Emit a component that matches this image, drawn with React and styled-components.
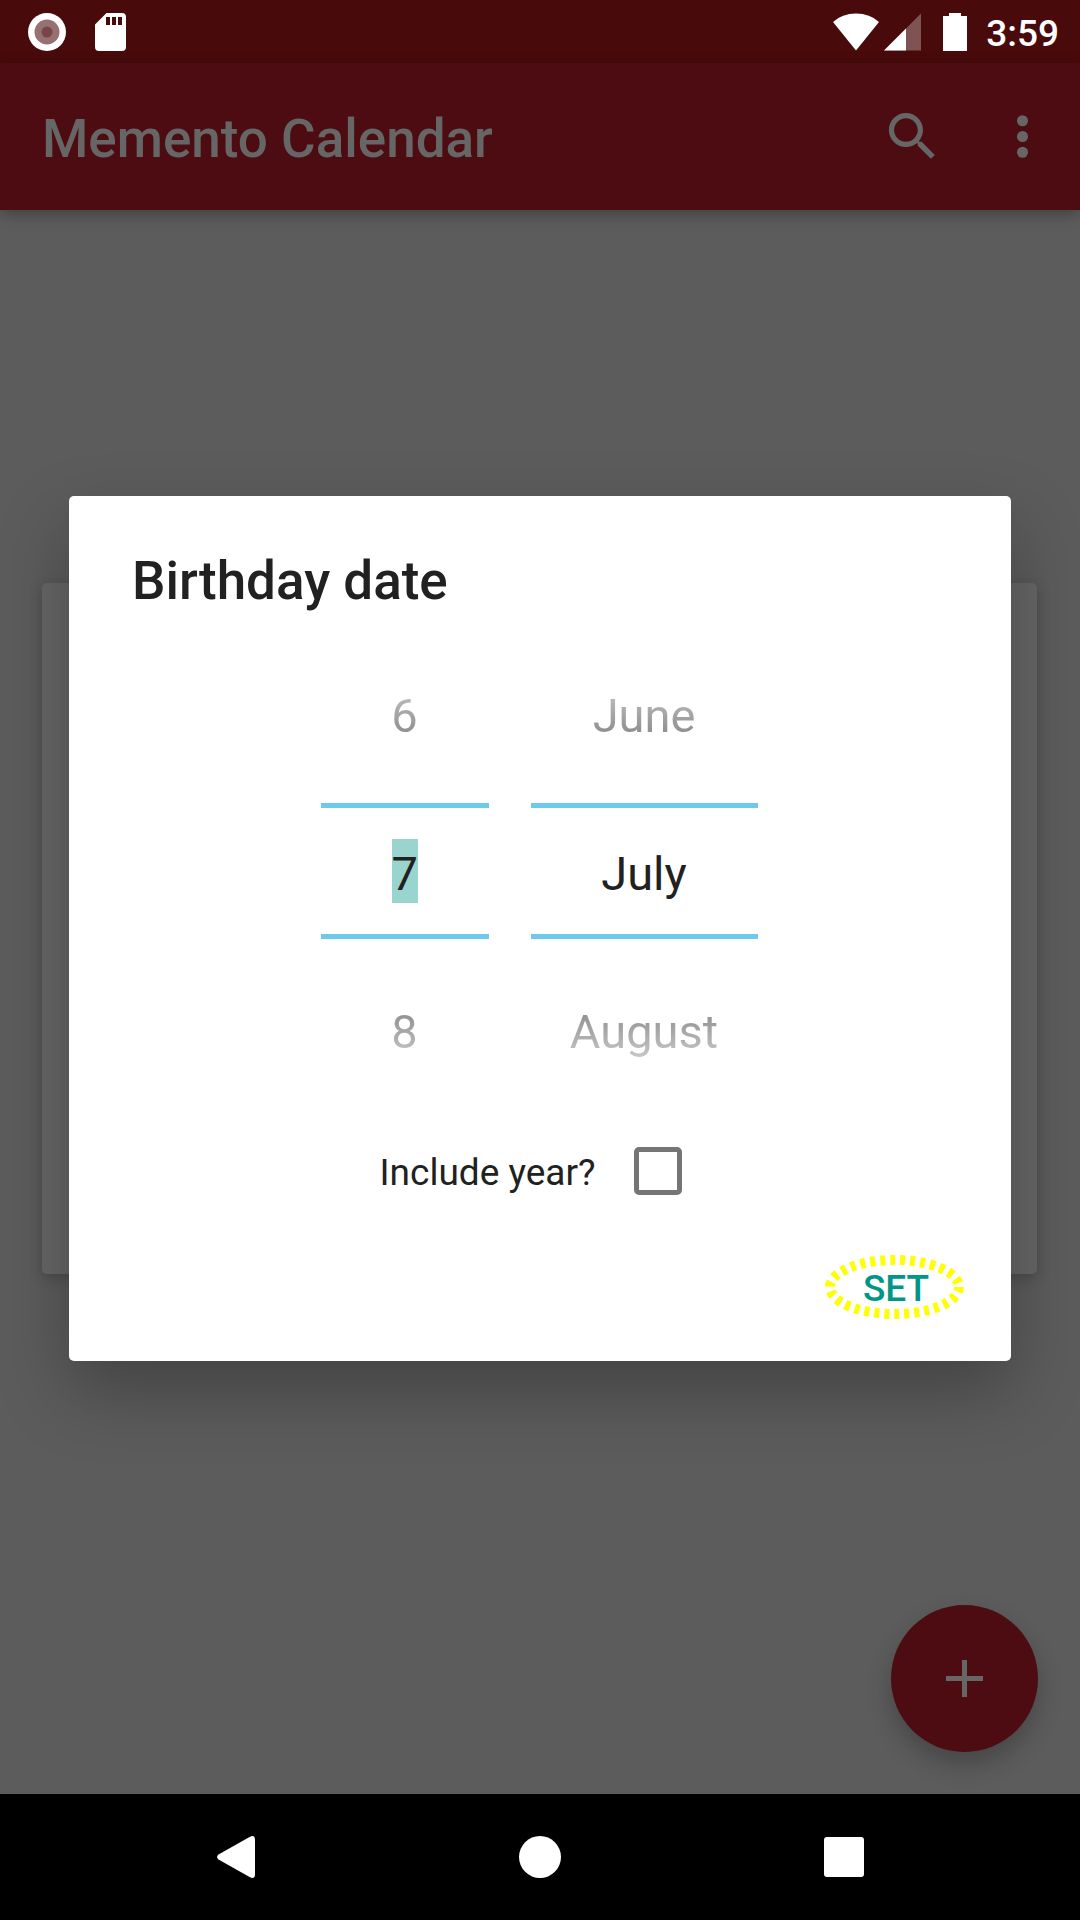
import React from "react";
import styled, { createGlobalStyle } from "styled-components";

const GlobalStyle = createGlobalStyle`
  *, *::before, *::after { box-sizing: border-box; }
  body { margin: 0; background: #5c5c5c; }
  button, input { font: inherit; color: inherit; border: 0; padding: 0; margin: 0; background: none; }
  button { cursor: pointer; }
  input:focus { outline: none; }
  svg { display: block; }
`;

const Screen = styled.div`
  display: flex;
  flex-direction: column;
  min-height: 100vh;
  background: #5c5c5c;
  color: #212121;
  font-family: Roboto, "Noto Sans", sans-serif;
`;

const StatusBar = styled.div`
  display: flex;
  align-items: center;
  justify-content: space-between;
  height: 63px;
  padding: 0 21px 0 28px;
  background: #480a0b;
  color: #fff;
`;

const StatusGroup = styled.div`
  display: flex;
  align-items: center;
  gap: ${(p) => p.$gap}px;
`;

const Clock = styled.time`
  padding-top: 4px;
  font-size: 37px;
  font-weight: 500;
  line-height: 44px;
`;

const Body = styled.div`
  flex: 1;
  display: grid;
  grid-template: 1fr / 1fr;

  > * { grid-area: 1 / 1; }
`;

const AppBar = styled.header`
  align-self: start;
  display: flex;
  align-items: center;
  gap: 47px;
  height: 147px;
  padding: 0 26px 0 42px;
  background: #4d0c12;
  color: #666;
  box-shadow: 0 4px 14px rgba(0, 0, 0, 0.3);
`;

const AppTitle = styled.h1`
  flex: 1;
  margin: 0;
  padding-top: 4px;
  font-size: 53px;
  font-weight: 500;
  line-height: 64px;
`;

const Card = styled.section`
  align-self: center;
  height: 691px;
  margin: 0 43px 0 42px;
  border-radius: 5px;
  background: #666;
  box-shadow: 0 4px 14px rgba(0, 0, 0, 0.2);
`;

const Fab = styled.button`
  align-self: end;
  justify-self: end;
  display: grid;
  place-items: center;
  width: 147px;
  height: 147px;
  margin: 42px;
  border-radius: 50%;
  background: #4d0c12;
  color: #666;
  box-shadow: 0 12px 24px rgba(0, 0, 0, 0.24);
`;

const Dialog = styled.form`
  align-self: center;
  display: flex;
  flex-direction: column;
  margin: 0 69px;
  padding: 53px 0 42px;
  border-radius: 5px;
  background: #fff;
  box-shadow: 0 30px 70px rgba(0, 0, 0, 0.28);
`;

const DialogTitle = styled.h2`
  margin: 0 0 16px;
  padding: 0 63px;
  font-size: 53px;
  font-weight: 500;
  line-height: 64px;
`;

const Pickers = styled.div`
  display: flex;
  justify-content: center;
  gap: 42px;
  padding-right: 2px;
  font-size: 47px;
  line-height: 56px;
`;

const Picker = styled.div`
  display: grid;
  grid-template-rows: 174px 136px 186px;
  width: ${(p) => p.$width}px;
`;

const Step = styled.button`
  display: grid;
  place-items: center;

  span {
    color: transparent;
    background: linear-gradient(${(p) => (p.$up ? "#c4c4c4, #828282" : "#868686, #cacaca")});
    background-clip: text;
    -webkit-background-clip: text;
  }
`;

const Selected = styled.div`
  display: grid;
  place-items: center;
  border: solid #6dcaec;
  border-width: 5px 0;
`;

const Value = styled.input`
  width: ${(p) => (p.$highlight ? "26px" : "100%")};
  height: 64px;
  padding-top: 4px;
  text-align: center;
  background: ${(p) => (p.$highlight ? "#99d5ce" : "transparent")};
`;

const YearOption = styled.label`
  align-self: center;
  display: flex;
  align-items: center;
  gap: 39px;
  height: 84px;
  margin: 4px 0 42px;
  padding-right: 18px;
  font-size: 37px;
  line-height: 44px;
`;

const YearText = styled.span`
  padding-top: 4px;
`;

const Checkbox = styled.input`
  appearance: none;
  width: 48px;
  height: 48px;
  border: 5px solid #757575;
  border-radius: 5px;

  &:checked { background: #009688; }
`;

const SetButton = styled.button`
  position: relative;
  align-self: flex-end;
  width: 140px;
  height: 64px;
  margin-right: 46px;
  padding: 4px 0 0 2px;
  color: #009688;
  font-size: 37px;
  font-weight: 500;
  line-height: 44px;
`;

const FocusRing = styled.svg`
  position: absolute;
  inset: 0;
`;

const IconButton = styled.button`
  display: grid;
  place-items: center;
`;

const NavBar = styled.nav`
  display: grid;
  grid-template-columns: repeat(3, 1fr);
  height: 126px;
  padding: 0 84px;
  background: #000;
  color: #fff;
`;

const StatusIcon = ({ width, children }) => (
  <svg width={width} height="38" viewBox={`0 0 ${width} 38`} fill="#fff" aria-hidden="true">
    {children}
  </svg>
);

const NumberPicker = ({ label, width, previous, value, next, highlight }) => (
  <Picker $width={width} role="group" aria-label={label}>
    <Step type="button" $up><span>{previous}</span></Step>
    <Selected>
      <Value aria-label={label} defaultValue={value} $highlight={highlight} />
    </Selected>
    <Step type="button"><span>{next}</span></Step>
  </Picker>
);

export default function App() {
  return (
    <Screen>
      <GlobalStyle />
      <StatusBar>
        <StatusGroup $gap={29}>
          <StatusIcon width={38}>
            <circle cx="19" cy="19" r="19" />
            <circle cx="19" cy="19" r="12.5" fill="#977072" />
            <circle cx="19" cy="19" r="5.5" fill="#774647" />
          </StatusIcon>
          <StatusIcon width={31}>
            <path fillRule="evenodd" d="M11.5 0H27a4 4 0 0 1 4 4v30a4 4 0 0 1-4 4H4a4 4 0 0 1-4-4V11.500zM11 4v8h4V4zM17 4v8h4V4zM23 4v8h4V4z" />
          </StatusIcon>
        </StatusGroup>
        <StatusGroup $gap={19}>
          <StatusGroup $gap={22}>
            <StatusGroup $gap={5}>
              <StatusIcon width={46}>
                <path d="M23 37.500L0 9Q9 .5 23 .5T46 9z" />
              </StatusIcon>
              <StatusIcon width={37}>
                <path d="M37 .5v37H0z" opacity=".3" />
                <path d="M22 15.500v22H0z" />
              </StatusIcon>
            </StatusGroup>
            <StatusIcon width={24}>
              <path d="M6 0h12v3h6v35H0V3h6z" />
            </StatusIcon>
          </StatusGroup>
          <Clock>3:59</Clock>
        </StatusGroup>
      </StatusBar>

      <Body>
        <AppBar>
          <AppTitle>Memento Calendar</AppTitle>
          <IconButton type="button" aria-label="Search">
            <svg width="63" height="63" viewBox="0 0 24 24" fill="currentColor">
              <path d="M15.500 14h-.79l-.28-.27C15.410 12.590 16 11.110 16 9.500 16 5.910 13.090 3 9.500 3S3 5.910 3 9.500 5.910 16 9.500 16c1.610 0 3.090-.59 4.230-1.570l.27.28v.79l5 4.990L20.490 19l-4.990-5zm-6 0C7.010 14 5 11.990 5 9.500S7.010 5 9.500 5 14 7.010 14 9.500 11.990 14 9.500 14z" />
            </svg>
          </IconButton>
          <IconButton type="button" aria-label="More options">
            <svg width="63" height="63" viewBox="0 0 24 24" fill="currentColor">
              <circle cx="12" cy="6" r="2.1" />
              <circle cx="12" cy="12" r="2.1" />
              <circle cx="12" cy="18" r="2.1" />
            </svg>
          </IconButton>
        </AppBar>
        <Card />
        <Fab type="button" aria-label="Add">
          <svg width="37" height="37" viewBox="0 0 37 37" fill="currentColor">
            <path d="M16 0h5v16h16v5H21v16h-5V21H0v-5h16z" />
          </svg>
        </Fab>
        <Dialog role="dialog" aria-labelledby="dialog-title" onSubmit={(e) => e.preventDefault()}>
          <DialogTitle id="dialog-title">Birthday date</DialogTitle>
          <Pickers>
            <NumberPicker label="Day" width={168} previous="6" value="7" next="8" highlight />
            <NumberPicker label="Month" width={227} previous="June" value="July" next="August" />
          </Pickers>
          <YearOption htmlFor="include-year">
            <YearText>Include year?</YearText>
            <Checkbox type="checkbox" id="include-year" />
          </YearOption>
          <SetButton type="submit">
            SET
            <FocusRing width="140" height="64" viewBox="0 0 140 64" aria-hidden="true">
              <ellipse cx="69.5" cy="32" rx="64.5" ry="27" fill="none" stroke="#ff0" strokeWidth="10" strokeDasharray="5 5" />
            </FocusRing>
          </SetButton>
        </Dialog>
      </Body>

      <NavBar aria-label="System">
        <IconButton type="button" aria-label="Back">
          <svg width="38" height="42" viewBox="0 0 38 42" fill="currentColor">
            <path d="M1.500 18.500L33 .8Q38-1.500 38 4v34q0 5.500-5 3.200L1.500 23.500q-3-2.500 0-5z" />
          </svg>
        </IconButton>
        <IconButton type="button" aria-label="Home">
          <svg width="42" height="42" viewBox="0 0 42 42" fill="currentColor">
            <circle cx="21" cy="21" r="21" />
          </svg>
        </IconButton>
        <IconButton type="button" aria-label="Recent apps">
          <svg width="40" height="40" viewBox="0 0 40 40" fill="currentColor">
            <rect width="40" height="40" rx="3" />
          </svg>
        </IconButton>
      </NavBar>
    </Screen>
  );
}
